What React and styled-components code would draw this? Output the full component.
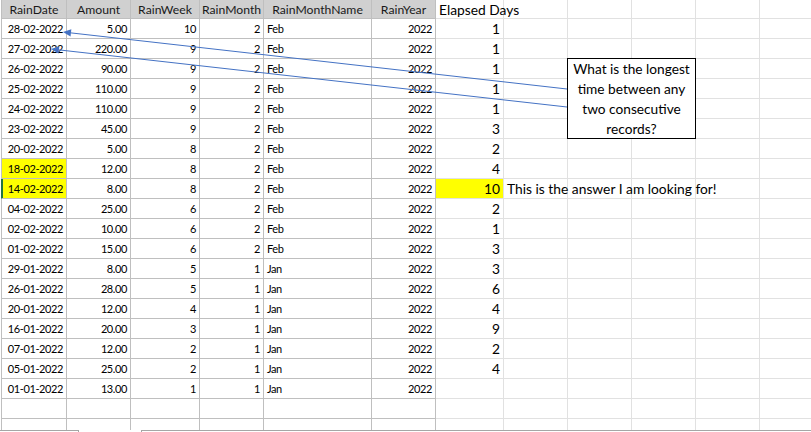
import React from "react";
import styled, { createGlobalStyle, css } from "styled-components";

const GlobalStyle = createGlobalStyle`
  html, body { margin: 0; padding: 0; background: #ffffff; overflow: hidden; }
  * { box-sizing: border-box; }
`;

const TABLE_LINE = "#bfbfbf";
const GRID_LINE = "#e1e1e1";
const FONT = `Lato, "Open Sans", "Liberation Sans", sans-serif`;

const Page = styled.div`
  position: relative;
  width: 811px;
  height: 432px;
  overflow: hidden;
  padding-left: 1px;
  display: flex;
  flex-direction: column;
`;

const Sheet = styled.div`
  display: grid;
  grid-template-columns: 66px 64px 69px 64px 108px 64px 68px 64px 64px 64px 64px 64px;
  grid-template-rows: 19px repeat(21, 20px);
  height: 430px;
  overflow: hidden;
  flex: none;
`;

const sizeFor = (p) => (p.$big ? "13.8px" : p.$header ? "12.2px" : "11px");
const spacingFor = (p) => (p.$big || p.$header ? "0" : "-0.4px");

const Cell = styled.div`
  display: flex;
  align-items: center;
  padding: 0 3px;
  white-space: nowrap;
  overflow: ${(p) => (p.$spill ? "visible" : "hidden")};
  font-family: ${FONT};
  color: #000;
  border-right: 1px solid ${(p) => (p.$table ? TABLE_LINE : GRID_LINE)};
  border-bottom: 1px solid ${(p) => (p.$table ? TABLE_LINE : GRID_LINE)};
  justify-content: ${(p) =>
    p.$align === "right" ? "flex-end" : p.$align === "center" ? "center" : "flex-start"};
  font-size: ${sizeFor};
  letter-spacing: ${spacingFor};
  background: ${(p) => p.$fill || "transparent"};
  ${(p) =>
    p.$first &&
    css`
      border-left: 1px solid ${TABLE_LINE};
    `}
  ${(p) =>
    p.$active &&
    css`
      box-shadow: inset 1px 0 0 #217346;
      border-left-color: #217346;
    `}
  ${(p) =>
    p.$header &&
    css`
      padding-top: 1px;
      color: #1a1a1a;
    `}
  position: relative;
  z-index: ${(p) => (p.$spill ? 1 : 0)};
`;

const Footer = styled.div`
  display: flex;
  height: 2px;
  margin-left: -1px;
`;

const FooterSeg = styled.div`
  border-top: 1px solid #a6a6a6;
  width: ${(p) => p.$w}px;
  flex: ${(p) => (p.$grow ? 1 : "none")};
`;

const FooterTab = styled.div`
  width: 64px;
  border-left: 1px solid #a6a6a6;
  border-right: 1px solid #a6a6a6;
  flex: none;
`;

const Callout = styled.div`
  position: absolute;
  left: 567px;
  top: 58px;
  width: 129px;
  height: 81px;
  border: 1.6px solid #000;
  background: #fff;
  display: flex;
  flex-direction: column;
  align-items: center;
  font-family: ${FONT};
  font-size: 13.7px;
  line-height: 20px;
  color: #000;
  z-index: 3;
`;

const CalloutLine = styled.span`
  white-space: nowrap;
`;

const Overlay = styled.svg`
  position: absolute;
  left: 0;
  top: 0;
  pointer-events: none;
  z-index: 4;
`;

const headers = ["RainDate", "Amount", "RainWeek", "RainMonth", "RainMonthName", "RainYear"];
const aligns = ["right", "right", "right", "right", "left", "right"];

const rows = [
  ["28-02-2022", "5.00", "10", "2", "Feb", "2022", "1"],
  ["27-02-2022", "220.00", "9", "2", "Feb", "2022", "1"],
  ["26-02-2022", "90.00", "9", "2", "Feb", "2022", "1"],
  ["25-02-2022", "110.00", "9", "2", "Feb", "2022", "1"],
  ["24-02-2022", "110.00", "9", "2", "Feb", "2022", "1"],
  ["23-02-2022", "45.00", "9", "2", "Feb", "2022", "3"],
  ["20-02-2022", "5.00", "8", "2", "Feb", "2022", "2"],
  ["18-02-2022", "12.00", "8", "2", "Feb", "2022", "4"],
  ["14-02-2022", "8.00", "8", "2", "Feb", "2022", "10"],
  ["04-02-2022", "25.00", "6", "2", "Feb", "2022", "2"],
  ["02-02-2022", "10.00", "6", "2", "Feb", "2022", "1"],
  ["01-02-2022", "15.00", "6", "2", "Feb", "2022", "3"],
  ["29-01-2022", "8.00", "5", "1", "Jan", "2022", "3"],
  ["26-01-2022", "28.00", "5", "1", "Jan", "2022", "6"],
  ["20-01-2022", "12.00", "4", "1", "Jan", "2022", "4"],
  ["16-01-2022", "20.00", "3", "1", "Jan", "2022", "9"],
  ["07-01-2022", "12.00", "2", "1", "Jan", "2022", "2"],
  ["05-01-2022", "25.00", "2", "1", "Jan", "2022", "4"],
  ["01-01-2022", "13.00", "1", "1", "Jan", "2022", ""],
];

const YELLOW = "#ffff00";
const EXTRA_COLS = 5;

function arrowHead(tip, from, len = 8, half = 3.6) {
  const dx = tip[0] - from[0];
  const dy = tip[1] - from[1];
  const L = Math.hypot(dx, dy);
  const ux = dx / L;
  const uy = dy / L;
  const bx = tip[0] - ux * len;
  const by = tip[1] - uy * len;
  const nx = -uy;
  const ny = ux;
  return {
    base: [bx, by],
    points: `${tip[0]},${tip[1]} ${bx + nx * half},${by + ny * half} ${bx - nx * half},${by - ny * half}`,
  };
}

const arrows = [
  { tip: [63, 32], from: [567, 89] },
  { tip: [51, 49], from: [567, 107] },
];

function HeaderRow() {
  return (
    <>
      {headers.map((h, i) => (
        <Cell key={h} $table $header $first={i === 0} $align="center" $fill="#d0d0d0">
          {h}
        </Cell>
      ))}
      <Cell $big $spill $align="left">Elapsed Days</Cell>
      {Array.from({ length: EXTRA_COLS }).map((_, i) => (
        <Cell key={i} />
      ))}
    </>
  );
}

function DataRow({ row, index }) {
  const yellowDate = index === 7 || index === 8;
  const answer = index === 8;
  return (
    <>
      {row.slice(0, 6).map((v, i) => (
        <Cell
          key={i}
          $table
          $first={i === 0}
          $active={i === 0 && answer}
          $align={aligns[i]}
          $fill={i === 0 && yellowDate ? YELLOW : undefined}
        >
          {v}
        </Cell>
      ))}
      <Cell $big $align="right" $fill={answer ? YELLOW : undefined}>
        {row[6]}
      </Cell>
      {Array.from({ length: EXTRA_COLS }).map((_, i) => (
        <Cell key={i} $big $spill={answer && i === 0}>
          {answer && i === 0 ? "This is the answer I am looking for!" : null}
        </Cell>
      ))}
    </>
  );
}

function EmptyRow() {
  return (
    <>
      {Array.from({ length: 6 }).map((_, i) => (
        <Cell key={i} $table $first={i === 0} />
      ))}
      {Array.from({ length: EXTRA_COLS + 1 }).map((_, i) => (
        <Cell key={"g" + i} />
      ))}
    </>
  );
}

export default function App() {
  return (
    <>
      <GlobalStyle />
      <Page>
        <Sheet>
          <HeaderRow />
          {rows.map((r, i) => (
            <DataRow key={i} row={r} index={i} />
          ))}
          <EmptyRow />
          <EmptyRow />
        </Sheet>
        <Footer>
          <FooterSeg $w={78} />
          <FooterTab />
          <FooterSeg $grow />
        </Footer>
        <Callout>
          <CalloutLine>What is the longest</CalloutLine>
          <CalloutLine>time between any</CalloutLine>
          <CalloutLine>two consecutive</CalloutLine>
          <CalloutLine>records?</CalloutLine>
        </Callout>
        <Overlay width="811" height="432" viewBox="0 0 811 432">
          {arrows.map((a, i) => {
            const head = arrowHead(a.tip, a.from);
            return (
              <g key={i}>
                <line
                  x1={a.from[0]}
                  y1={a.from[1]}
                  x2={head.base[0]}
                  y2={head.base[1]}
                  stroke="#4472c4"
                  strokeWidth="1"
                />
                <polygon points={head.points} fill="#4472c4" />
              </g>
            );
          })}
        </Overlay>
      </Page>
    </>
  );
}
